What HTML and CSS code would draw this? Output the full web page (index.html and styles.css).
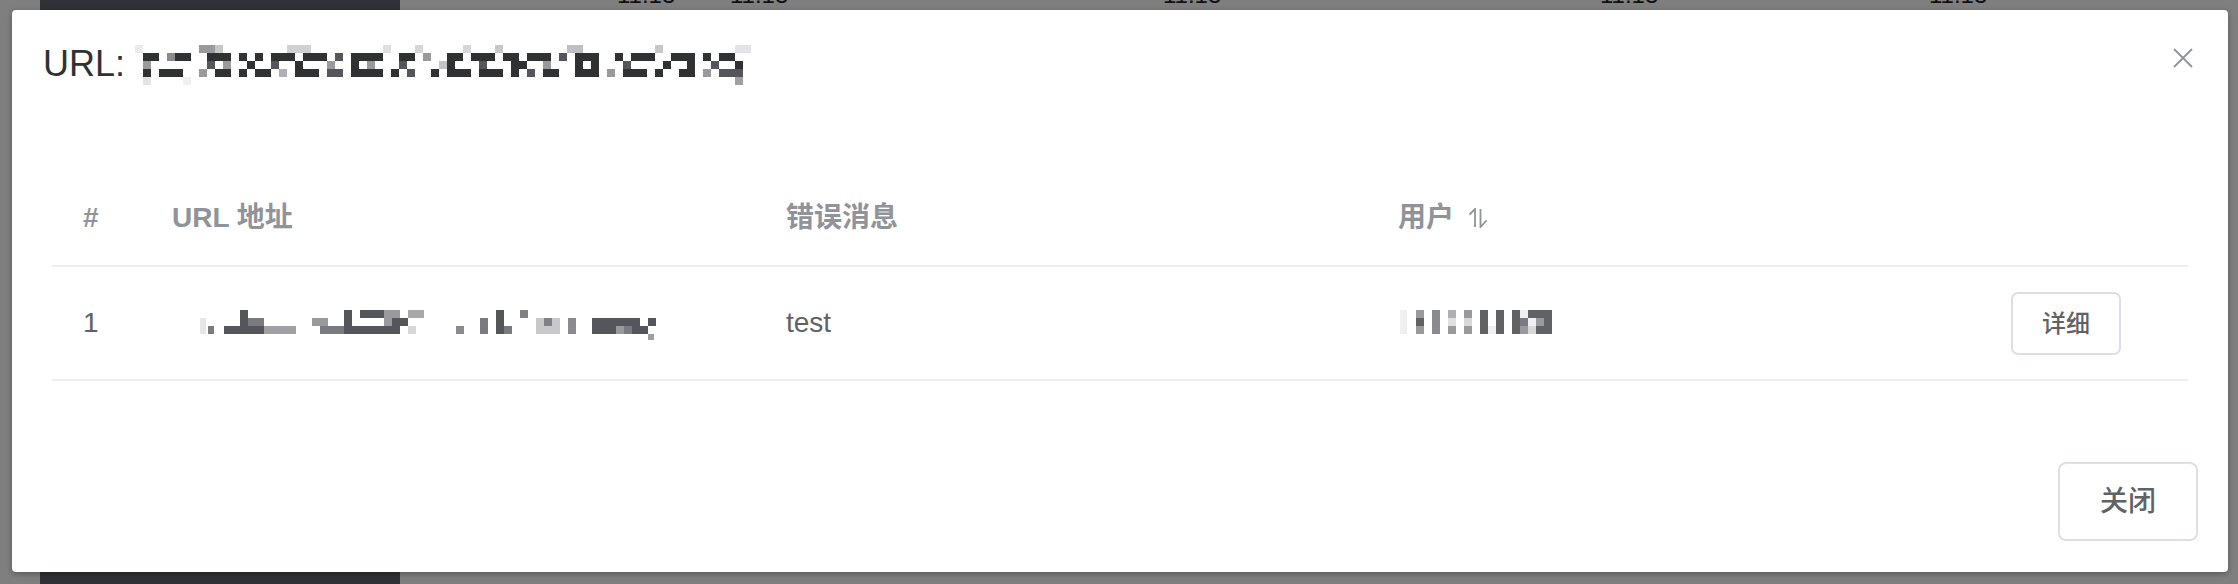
FILE: index.html
```html
<!DOCTYPE html>
<html lang="zh-CN">
<head>
<meta charset="utf-8">
<title>URL 详情</title>
<link rel="stylesheet" href="styles.css">
</head>
<body>
<div class="page">
  <aside class="sidebar"></aside>
  <main class="content">
    <div class="bg-row">
      <span></span><span>11:13</span><span>11:13</span><span>11:13</span><span>11:13</span><span>11:13</span>
    </div>
  </main>
</div>

<div class="dialog" role="dialog">
  <div class="dialog-header">
    <span class="dialog-title">URL: <svg class="mosaic-title" width="624" height="40" viewBox="0 0 624 40" aria-label="已打码">
      <g fill="#303133">
        <rect x="0" y="0" width="8" height="8" fill="#ececee"/>
        <rect x="64" y="0" width="16" height="8" fill="#9a9a9e"/>
        <rect x="80" y="0" width="8" height="8" fill="#c8c8ca"/>
        <rect x="152" y="0" width="24" height="8" fill="#d0d0d2"/>
        <rect x="248" y="0" width="8" height="8" fill="#e0e0e2"/>
        <rect x="280" y="0" width="8" height="8" fill="#d6d6d8"/>
        <rect x="328" y="0" width="8" height="8" fill="#d6d6d8"/>
        <rect x="360" y="0" width="8" height="8" fill="#c8c8ca"/>
        <rect x="432" y="0" width="16" height="8" fill="#c0c0c2"/>
        <rect x="520" y="0" width="8" height="8" fill="#c8c8ca"/>
        <rect x="600" y="0" width="16" height="8" fill="#e4e4e6"/>

        <rect x="8" y="8" width="16" height="8"/>
        <rect x="32" y="8" width="8" height="8" fill="#8a8b90"/>
        <rect x="40" y="8" width="16" height="8"/>
        <rect x="72" y="8" width="24" height="8"/>
        <rect x="104" y="8" width="8" height="8"/>
        <rect x="120" y="8" width="8" height="8"/>
        <rect x="136" y="8" width="24" height="8"/>
        <rect x="168" y="8" width="24" height="8"/>
        <rect x="200" y="8" width="8" height="8" fill="#55565b"/>
        <rect x="216" y="8" width="32" height="8"/>
        <rect x="264" y="8" width="16" height="8"/>
        <rect x="288" y="8" width="8" height="8" fill="#9a9a9e"/>
        <rect x="312" y="8" width="16" height="8"/>
        <rect x="336" y="8" width="24" height="8"/>
        <rect x="368" y="8" width="16" height="8"/>
        <rect x="392" y="8" width="24" height="8"/>
        <rect x="424" y="8" width="8" height="8" fill="#55565b"/>
        <rect x="440" y="8" width="24" height="8"/>
        <rect x="480" y="8" width="8" height="8"/>
        <rect x="496" y="8" width="24" height="8"/>
        <rect x="536" y="8" width="24" height="8"/>
        <rect x="568" y="8" width="8" height="8"/>
        <rect x="584" y="8" width="16" height="8"/>

        <rect x="8" y="16" width="8" height="8" fill="#9a9a9e"/>
        <rect x="72" y="16" width="8" height="8" fill="#55565b"/>
        <rect x="88" y="16" width="8" height="8" fill="#9a9a9e"/>
        <rect x="112" y="16" width="8" height="8"/>
        <rect x="136" y="16" width="8" height="8" fill="#55565b"/>
        <rect x="160" y="16" width="8" height="8"/>
        <rect x="192" y="16" width="8" height="8" fill="#9a9a9e"/>
        <rect x="216" y="16" width="8" height="8"/>
        <rect x="232" y="16" width="8" height="8" fill="#9a9a9e"/>
        <rect x="264" y="16" width="8" height="8" fill="#55565b"/>
        <rect x="304" y="16" width="8" height="8" fill="#c4c4c6"/>
        <rect x="312" y="16" width="8" height="8"/>
        <rect x="344" y="16" width="8" height="8" fill="#55565b"/>
        <rect x="376" y="16" width="16" height="8"/>
        <rect x="408" y="16" width="8" height="8" fill="#9a9a9e"/>
        <rect x="440" y="16" width="8" height="8"/>
        <rect x="456" y="16" width="8" height="8"/>
        <rect x="488" y="16" width="8" height="8" fill="#55565b"/>
        <rect x="528" y="16" width="8" height="8"/>
        <rect x="552" y="16" width="8" height="8"/>
        <rect x="576" y="16" width="8" height="8" fill="#55565b"/>
        <rect x="600" y="16" width="8" height="8"/>

        <rect x="8" y="24" width="8" height="8"/>
        <rect x="24" y="24" width="24" height="8"/>
        <rect x="64" y="24" width="8" height="8" fill="#9a9a9e"/>
        <rect x="80" y="24" width="16" height="8"/>
        <rect x="104" y="24" width="8" height="8"/>
        <rect x="120" y="24" width="16" height="8"/>
        <rect x="144" y="24" width="8" height="8" fill="#b0b0b4"/>
        <rect x="160" y="24" width="24" height="8"/>
        <rect x="192" y="24" width="16" height="8" fill="#55565b"/>
        <rect x="216" y="24" width="32" height="8"/>
        <rect x="256" y="24" width="8" height="8"/>
        <rect x="272" y="24" width="8" height="8" fill="#55565b"/>
        <rect x="296" y="24" width="8" height="8"/>
        <rect x="312" y="24" width="24" height="8"/>
        <rect x="344" y="24" width="24" height="8"/>
        <rect x="376" y="24" width="8" height="8"/>
        <rect x="392" y="24" width="8" height="8" fill="#55565b"/>
        <rect x="408" y="24" width="16" height="8"/>
        <rect x="440" y="24" width="24" height="8"/>
        <rect x="472" y="24" width="8" height="8" fill="#9a9a9e"/>
        <rect x="488" y="24" width="24" height="8"/>
        <rect x="520" y="24" width="8" height="8"/>
        <rect x="544" y="24" width="16" height="8"/>
        <rect x="568" y="24" width="8" height="8" fill="#9a9a9e"/>
        <rect x="584" y="24" width="24" height="8" fill="#55565b"/>

        <rect x="8" y="32" width="8" height="8" fill="#e4e4e6"/>
        <rect x="48" y="32" width="8" height="8" fill="#f0f0f0"/>
        <rect x="600" y="32" width="8" height="8" fill="#a0a0a4"/>
      </g>
    </svg></span>
    <button class="dialog-close" aria-label="关闭">
      <svg width="20" height="20" viewBox="0 0 20 20"><path d="M1 1 L19 19 M19 1 L1 19" stroke="#909399" stroke-width="1.8" fill="none"/></svg>
    </button>
  </div>

  <div class="dialog-body">
    <div class="table">
      <div class="tr th">
        <div class="cell cell-index">#</div>
        <div class="cell">URL 地址</div>
        <div class="cell">错误消息</div>
        <div class="cell">用户<svg class="sort-icon" width="20" height="20" viewBox="0 0 20 20"><path d="M7 19 V1 L1.5 6.5 M12.5 1 V19 L18.5 12.5" stroke="#909399" stroke-width="1.8" fill="none"/></svg></div>
        <div class="cell"></div>
      </div>
      <div class="tr td">
        <div class="cell cell-index">1</div>
        <div class="cell"><svg class="mosaic" width="484" height="40" viewBox="0 0 484 40" aria-label="已打码">
          <g transform="translate(28,7)" fill="#55565b">
            <rect x="0" y="8" width="6" height="16" fill="#e6e6e8"/>
            <rect x="8" y="16" width="6" height="8" fill="#7a7b80"/>
            <rect x="24" y="16" width="24" height="8"/>
            <rect x="40" y="0" width="8" height="16"/>
            <rect x="48" y="8" width="16" height="8" fill="#7a7b80"/>
            <rect x="48" y="16" width="16" height="8"/>
            <rect x="64" y="16" width="32" height="8" fill="#a0a0a4"/>
            <rect x="112" y="8" width="16" height="8" fill="#9a9a9e"/>
            <rect x="120" y="16" width="24" height="8" fill="#7a7b80"/>
            <rect x="144" y="0" width="8" height="24"/>
            <rect x="144" y="16" width="40" height="8"/>
            <rect x="160" y="0" width="24" height="8"/>
            <rect x="184" y="0" width="16" height="16" fill="#9a9a9e"/>
            <rect x="192" y="8" width="16" height="8"/>
            <rect x="208" y="0" width="16" height="8" fill="#a8a8ac"/>
            <rect x="184" y="16" width="16" height="8"/>
            <rect x="208" y="16" width="8" height="8" fill="#d8d8da"/>
            <rect x="256" y="16" width="8" height="8" fill="#8a8b90"/>
            <rect x="280" y="8" width="8" height="16" fill="#7a7b80"/>
            <rect x="296" y="0" width="8" height="24"/>
            <rect x="304" y="16" width="8" height="8" fill="#7a7b80"/>
            <rect x="320" y="0" width="8" height="8" fill="#808086"/>
            <rect x="336" y="8" width="24" height="16" fill="#c8c8ca"/>
            <rect x="344" y="8" width="8" height="8" fill="#808086"/>
            <rect x="368" y="8" width="8" height="16" fill="#8a8b90"/>
            <rect x="392" y="8" width="24" height="16"/>
            <rect x="416" y="8" width="24" height="8"/>
            <rect x="416" y="16" width="8" height="8" fill="#9a9a9e"/>
            <rect x="424" y="16" width="8" height="8" fill="#7a7b80"/>
            <rect x="432" y="16" width="16" height="8" fill="#55565b"/>
            <rect x="448" y="8" width="8" height="8" fill="#55565b"/>
            <rect x="448" y="24" width="6" height="6" fill="#a0a0a4"/>
          </g>
        </svg></div>
        <div class="cell">test</div>
        <div class="cell"><svg class="mosaic" width="156" height="40" viewBox="0 0 156 40" aria-label="已打码">
          <g transform="translate(2,7)" fill="#606266">
            <rect x="0" y="0" width="7" height="24" fill="#f0f0f2"/>
            <rect x="16" y="0" width="8" height="8" fill="#9a9a9e"/>
            <rect x="16" y="8" width="8" height="8"/>
            <rect x="16" y="16" width="8" height="8" fill="#9a9a9e"/>
            <rect x="32" y="0" width="8" height="24" fill="#8a8b90"/>
            <rect x="48" y="0" width="8" height="8" fill="#b0b0b4"/>
            <rect x="48" y="8" width="8" height="8" fill="#e0e0e2"/>
            <rect x="48" y="16" width="8" height="8" fill="#9a9a9e"/>
            <rect x="64" y="0" width="8" height="8" fill="#9a9a9e"/>
            <rect x="64" y="8" width="8" height="8" fill="#d8d8da"/>
            <rect x="64" y="16" width="8" height="8" fill="#9a9a9e"/>
            <rect x="80" y="0" width="8" height="24"/>
            <rect x="88" y="16" width="8" height="8" fill="#f0f0f2"/>
            <rect x="96" y="0" width="8" height="24"/>
            <rect x="112" y="0" width="8" height="24"/>
            <rect x="120" y="0" width="8" height="8" fill="#f0f0f2"/>
            <rect x="120" y="8" width="8" height="8" fill="#7a7b80"/>
            <rect x="120" y="16" width="8" height="8" fill="#9a9a9e"/>
            <rect x="128" y="0" width="8" height="8"/>
            <rect x="128" y="8" width="8" height="8" fill="#f0f0f2"/>
            <rect x="128" y="16" width="8" height="8" fill="#d8d8da"/>
            <rect x="136" y="0" width="16" height="24"/>
            <rect x="136" y="8" width="8" height="8" fill="#9a9a9e"/>
          </g>
        </svg></div>
        <div class="cell"><button class="btn btn-small">详细</button></div>
      </div>
    </div>
  </div>

  <div class="dialog-footer">
    <button class="btn btn-default">关闭</button>
  </div>
</div>
</body>
</html>
```

FILE: styles.css
```css
* {
  box-sizing: border-box;
}

html,
body {
  margin: 0;
  height: 100%;
}

body {
  background: #7f7f7f;
  font-family: "Liberation Sans", "Noto Sans CJK SC", sans-serif;
  overflow: hidden;
}

/* background page under the mask */
.page {
  display: flex;
  height: 584px;
  padding-left: 40px;
}

.sidebar {
  flex: none;
  width: 360px;
  background: #303136;
}

.content {
  flex: 1;
  overflow: hidden;
}

.bg-row {
  display: grid;
  grid-template-columns: 217px 113px 433px 437px 329px auto;
  margin-top: -17px;
  font-size: 24px;
  line-height: 24px;
  color: #101010;
}

/* dialog */
.dialog {
  position: absolute;
  left: 12px;
  top: 10px;
  width: 2216px;
  height: 562px;
  display: flex;
  flex-direction: column;
  background: #fff;
  border-radius: 4px;
  box-shadow: 0 2px 6px rgba(0, 0, 0, 0.3);
}

.dialog-header {
  position: relative;
  padding: 30px 80px 0 31px;
  white-space: nowrap;
}

.dialog-title {
  font-size: 36px;
  line-height: 48px;
  color: #303133;
}

.mosaic-title {
  display: inline-block;
  vertical-align: -9px;
}

.dialog-close {
  position: absolute;
  top: 38px;
  right: 35px;
  width: 20px;
  height: 20px;
  padding: 0;
  border: 0;
  background: none;
  display: flex;
}

.dialog-body {
  padding: 83px 40px 0;
}

.tr {
  display: grid;
  grid-template-columns: 100px 614px 612px 613px 1fr;
  border-bottom: 2px solid #ebeef5;
}

.th {
  height: 96px;
  color: #909399;
  font-weight: bold;
}

.td {
  height: 114px;
  color: #606266;
}

.cell {
  display: flex;
  align-items: center;
  padding: 0 20px;
  font-size: 28px;
  line-height: 46px;
  white-space: nowrap;
}

.cell-index {
  padding-left: 31px;
}

.sort-icon {
  margin-left: 14px;
  flex: none;
}

.mosaic {
  display: block;
  flex: none;
}

.btn {
  font-family: "Liberation Sans", "Noto Sans CJK SC", sans-serif;
  font-weight: 500;
  background: #fff;
  color: #606266;
  border: 2px solid #dcdfe6;
  cursor: pointer;
}

.btn-small {
  font-size: 24px;
  line-height: 25px;
  padding: 17px 29px;
  border-radius: 7px;
}

.dialog-footer {
  margin-top: auto;
  display: flex;
  justify-content: flex-end;
  padding: 0 30px 31px;
}

.btn-default {
  font-size: 28px;
  line-height: 28px;
  padding: 24px 40px 23px;
  border-radius: 8px;
}
```
